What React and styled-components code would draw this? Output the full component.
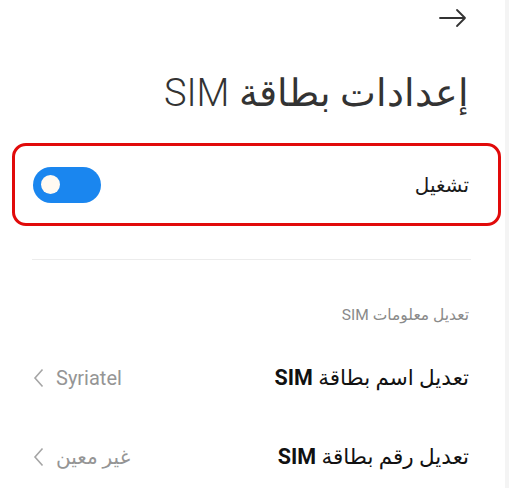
import React, { useState } from "react";
import styled, { createGlobalStyle } from "styled-components";

/*-------------- Global --------------------*/
const GlobalStyle = createGlobalStyle`
  html, body {
    margin: 0;
    padding: 0;
    background: #ffffff;
  }
  body {
    font-family: "Roboto", "Noto Sans", "DejaVu Sans", sans-serif;
    -webkit-font-smoothing: antialiased;
  }
`;

/*-------------- Layout --------------------*/
const Page = styled.div`
  direction: rtl;
  width: 509px;
  height: 488px;
  overflow: hidden;
  box-sizing: border-box;
  border-left: 5px solid transparent;
  border-right: 4px solid #f4f4f4;
`;

const Header = styled.div`
  height: 36px;
  display: flex;
  align-items: center;
  padding-right: 38px;
`;

const BackButton = styled.button`
  border: none;
  background: none;
  padding: 0;
  width: 28px;
  height: 20px;
  display: flex;
  align-items: center;
  justify-content: center;
  color: #333;
`;

const Title = styled.h1`
  margin: 35px 0 0 0;
  padding-right: 36px;
  font-size: 38px;
  line-height: 45px;
  font-weight: 300;
  color: #333333;
`;

/*-------------- Toggle card --------------------*/
const Card = styled.div`
  margin: 27px 4px 0 7px;
  height: 83px;
  box-sizing: border-box;
  border: 3px solid #e10a0a;
  border-radius: 14px;
  display: flex;
  align-items: center;
  justify-content: space-between;
  padding: 0 29px 0 18px;
`;

const Label = styled.span`
  font-size: 20px;
  color: #1a1a1a;
`;

const Switch = styled.button`
  width: 68px;
  height: 36px;
  border: none;
  border-radius: 18px;
  background: ${(p) => (p.$on ? "#1a86ef" : "#d8d8d8")};
  padding: 0 8px;
  display: flex;
  align-items: center;
  justify-content: ${(p) => (p.$on ? "flex-end" : "flex-start")};
  cursor: pointer;
`;

const Knob = styled.span`
  width: 19px;
  height: 19px;
  border-radius: 50%;
  background: #fffaf2;
`;

const Divider = styled.hr`
  margin: 33px 34px 0 27px;
  border: none;
  border-top: 1px solid #ececec;
  height: 0;
`;

/*-------------- List --------------------*/
const SectionTitle = styled.div`
  margin-top: 45px;
  padding-right: 36px;
  font-size: 15.5px;
  line-height: 20px;
  color: #8a8a8a;
`;

const List = styled.div`
  margin-top: 13px;
  display: flex;
  flex-direction: column;
`;

const Row = styled.div`
  height: 79px;
  display: flex;
  align-items: center;
  justify-content: space-between;
  padding: 0 36px 0 28px;
`;

const RowLabel = styled.span`
  font-size: 21.5px;
  font-weight: 400;
  color: #111;

  b {
    font-weight: 700;
  }
`;

const RowValue = styled.span`
  display: flex;
  align-items: center;
  gap: 12px;
  font-size: 20px;
  color: #959595;
`;

const Chevron = () => (
  <svg width="11" height="20" viewBox="0 0 11 20" fill="none">
    <path d="M9.5 1.5 L2 10 L9.5 18.5" stroke="#a5a5a5" strokeWidth="1.6" />
  </svg>
);

const Arrow = () => (
  <svg width="28" height="20" viewBox="0 0 28 20" fill="none">
    <path
      d="M1 10 H26 M18 2 L26 10 L18 18"
      stroke="#333"
      strokeWidth="1.8"
      strokeLinecap="round"
      strokeLinejoin="round"
    />
  </svg>
);

const rows = [
  { id: 1, label: "تعديل اسم بطاقة", value: "Syriatel" },
  { id: 2, label: "تعديل رقم بطاقة", value: "غير معين" },
];

/*------------- Main Component ------------------*/
const App = () => {
  const [on, setOn] = useState(true);

  return (
    <>
      <GlobalStyle />
      <Page>
        <Header>
          <BackButton aria-label="رجوع">
            <Arrow />
          </BackButton>
        </Header>

        <Title>إعدادات بطاقة SIM</Title>

        <Card>
          <Label>تشغيل</Label>
          <Switch $on={on} onClick={() => setOn(!on)}>
            <Knob />
          </Switch>
        </Card>

        <Divider />

        <SectionTitle>تعديل معلومات SIM</SectionTitle>

        <List>
          {rows.map((row) => (
            <Row key={row.id}>
              <RowLabel>
                {row.label} <b>SIM</b>
              </RowLabel>
              <RowValue>
                <span>{row.value}</span>
                <Chevron />
              </RowValue>
            </Row>
          ))}
        </List>
      </Page>
    </>
  );
};

export default App;
